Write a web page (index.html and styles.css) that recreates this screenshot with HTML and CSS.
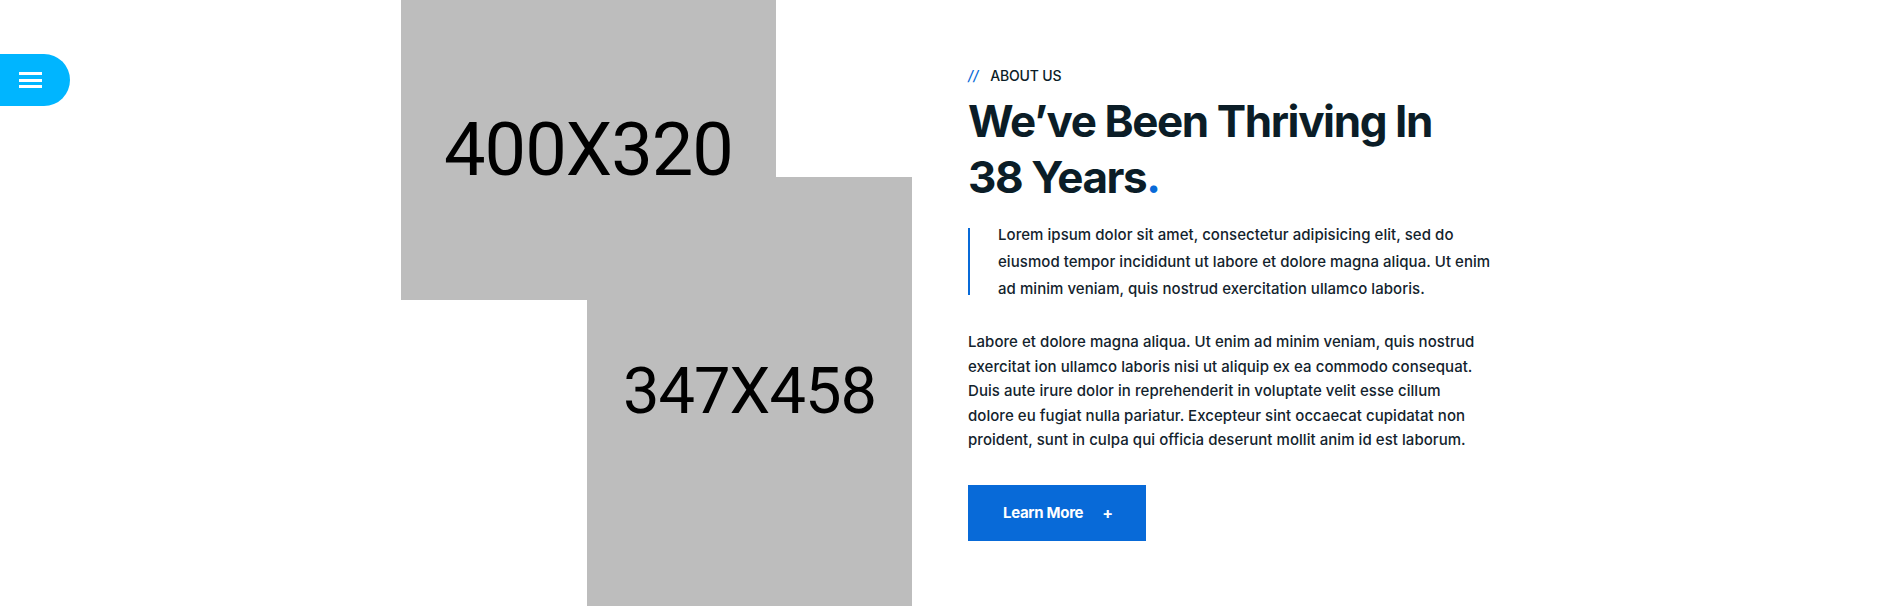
FILE: index.html
```html
<!DOCTYPE html>
<html lang="en">
<head>
<meta charset="utf-8">
<title>About Us</title>
<link rel="stylesheet" href="styles.css">
</head>
<body>
<button class="menu-toggle" aria-label="Open menu">
  <span class="menu-bar"></span>
  <span class="menu-bar"></span>
  <span class="menu-bar"></span>
</button>

<section class="about">
  <div class="about-media">
    <div class="placeholder placeholder-lg"><span>400X320</span></div>
    <div class="placeholder placeholder-tall"><span>347X458</span></div>
  </div>
  <div class="about-content">
    <div class="eyebrow"><span class="eyebrow-mark">//</span><span>ABOUT US</span></div>
    <h2 class="about-title">We’ve Been Thriving In 38 Years<span class="dot">.</span></h2>
    <p class="lead">Lorem ipsum dolor sit amet, consectetur adipisicing elit, sed do eiusmod tempor incididunt ut labore et dolore magna aliqua. Ut enim ad minim veniam, quis nostrud exercitation ullamco laboris.</p>
    <p class="body-text">Labore et dolore magna aliqua. Ut enim ad minim veniam, quis nostrud exercitat ion ullamco laboris nisi ut aliquip ex ea commodo consequat. Duis aute irure dolor in reprehenderit in voluptate velit esse cillum dolore eu fugiat nulla pariatur. Excepteur sint occaecat cupidatat non proident, sunt in culpa qui officia deserunt mollit anim id est laborum.</p>
    <a class="btn-primary" href="#">Learn More <span class="btn-plus">+</span></a>
  </div>
</section>
</body>
</html>
```

FILE: styles.css
```css
* { box-sizing: border-box; }

html, body {
  margin: 0;
  padding: 0;
  background: #ffffff;
}

body {
  font-family: Inter, "Noto Sans", sans-serif;
  color: #13232d;
}

.menu-toggle {
  position: absolute;
  left: 0;
  top: 54px;
  width: 70px;
  height: 52px;
  border: 0;
  padding: 0 0 0 19px;
  background: #00b5ff;
  border-radius: 0 26px 26px 0;
  display: flex;
  flex-direction: column;
  justify-content: center;
  align-items: flex-start;
  gap: 3.5px;
  cursor: pointer;
}

.menu-bar {
  display: block;
  width: 23px;
  height: 3px;
  background: #ffffff;
}

.about {
  width: 1100px;
  margin: 0 auto;
  display: grid;
  grid-template-columns: 567px 533px;
}

.about-media {
  display: flex;
  flex-direction: column;
}

.placeholder {
  background: #bdbdbd;
  color: #000;
  font-family: Roboto, "Liberation Sans", sans-serif;
  display: flex;
  align-items: center;
  justify-content: center;
  line-height: 1;
  letter-spacing: -1px;
}

.placeholder-lg {
  width: 375px;
  height: 300px;
  font-size: 74px;
}

.placeholder-tall {
  width: 325px;
  height: 429px;
  margin-top: -123px;
  margin-left: 186px;
  font-size: 65px;
}

.about-content {
  padding-top: 66px;
}

.eyebrow {
  display: flex;
  align-items: center;
  gap: 12px;
  font-size: 14px;
  font-weight: 500;
  line-height: 20px;
  color: #0b1d27;
  letter-spacing: -0.2px;
}

.eyebrow-mark {
  color: #086ad8;
  font-style: italic;
  font-weight: 500;
  letter-spacing: 0;
}

.about-title {
  margin: 7px 0 0;
  font-size: 44px;
  line-height: 56px;
  font-weight: 700;
  letter-spacing: -1.4px;
  color: #0b1d27;
  max-width: 480px;
}

.dot {
  color: #086ad8;
}

.lead {
  position: relative;
  margin: 16px 0 0;
  padding-left: 30px;
  font-size: 15px;
  line-height: 27px;
  font-weight: 500;
  letter-spacing: 0.05px;
}

.lead::before {
  content: "";
  position: absolute;
  left: 0;
  top: 7px;
  bottom: 7px;
  width: 2px;
  background: #086ad8;
}

.body-text {
  margin: 28px 0 0;
  max-width: 515px;
  font-size: 15px;
  line-height: 24.5px;
  font-weight: 500;
  letter-spacing: 0.05px;
}

.btn-primary {
  margin-top: 32px;
  display: inline-flex;
  align-items: center;
  gap: 19px;
  height: 56px;
  padding: 0 33px 0 35px;
  background: #086ad8;
  color: #ffffff;
  text-decoration: none;
  font-size: 15px;
  font-weight: 700;
  letter-spacing: -0.3px;
}

.btn-plus {
  font-size: 16px;
  font-weight: 700;
}
```
